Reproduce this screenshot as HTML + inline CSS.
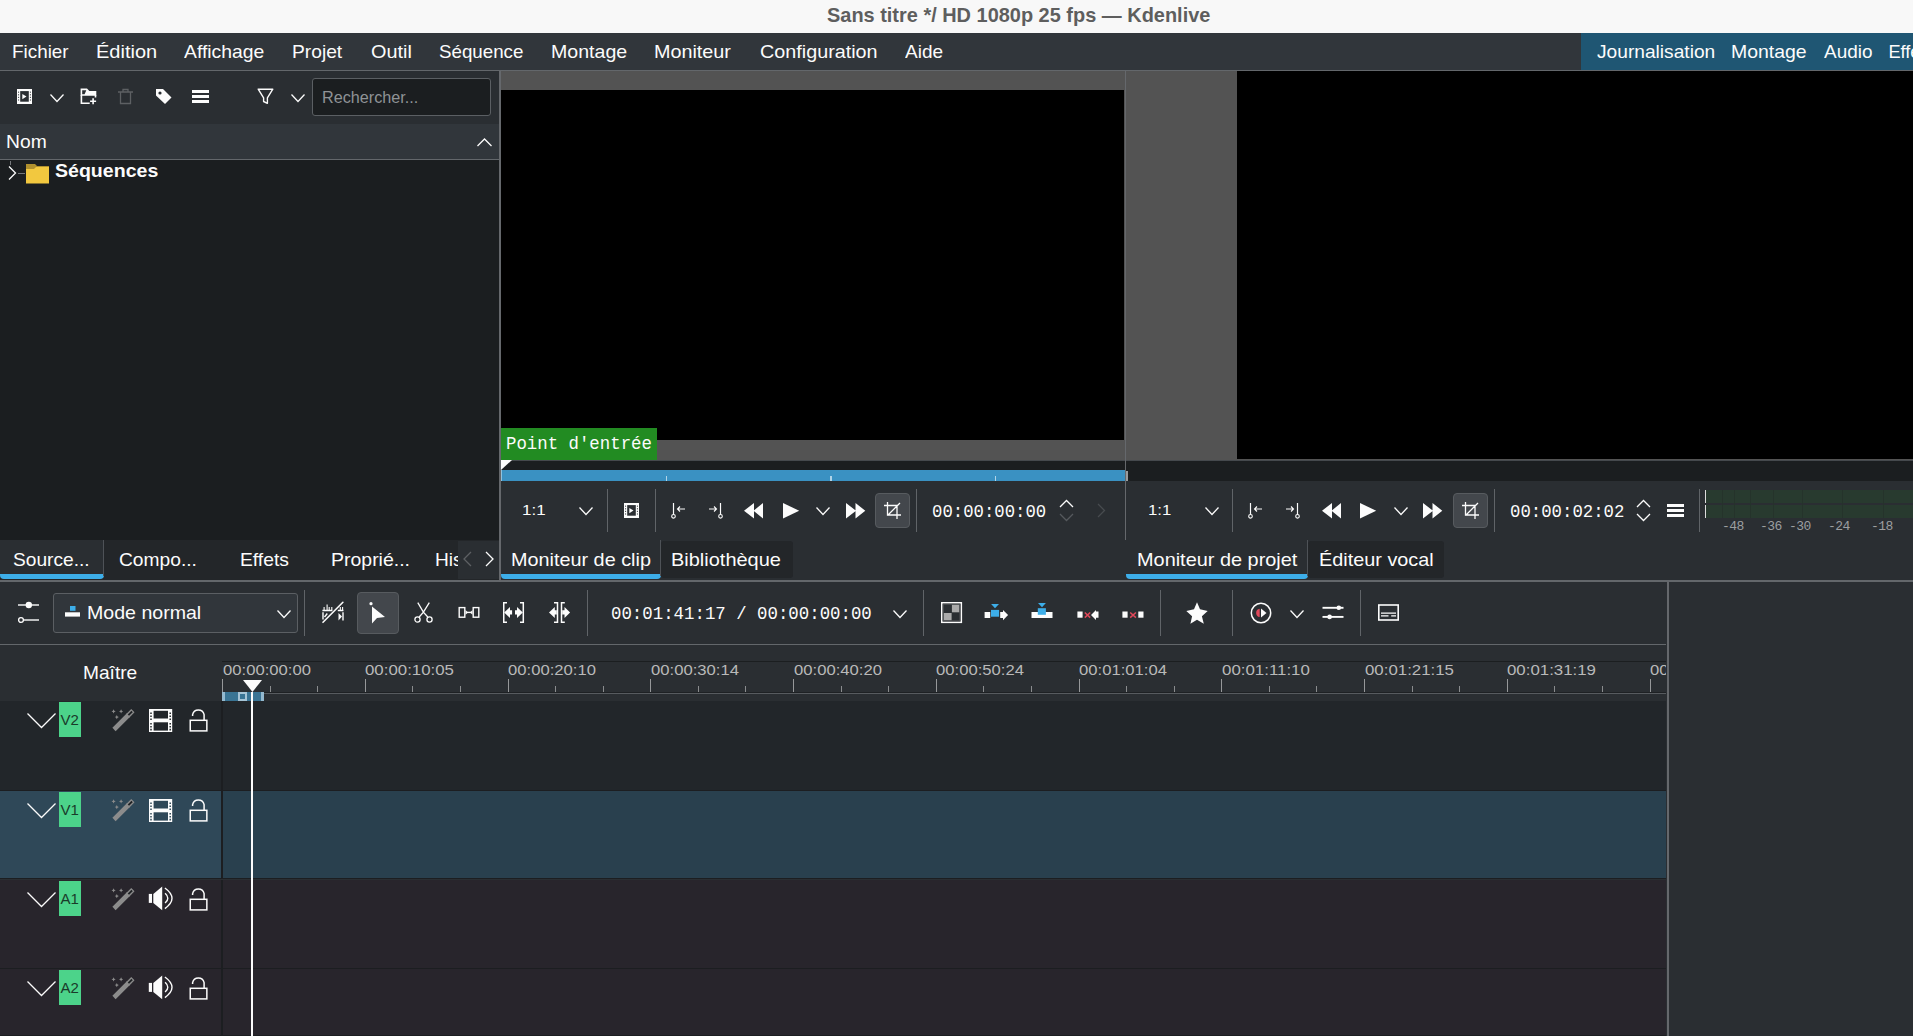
<!DOCTYPE html>
<html><head><meta charset="utf-8">
<style>
*{margin:0;padding:0;box-sizing:border-box}
html,body{width:1913px;height:1036px;overflow:hidden;background:#2a2e32}
body{position:relative;font-family:"Liberation Sans",sans-serif;color:#fcfcfc}
.a{position:absolute}
.t{position:absolute;white-space:pre;line-height:1}
svg{position:absolute;overflow:visible}
</style></head><body>
<div class="a" style="left:0px;top:0px;width:1913px;height:33px;background:#f8f8f8;"></div>
<div class="t" style="left:826.80px;top:4.93px;font-size:20.4px;font-weight:bold;color:#5e5e5e;font-family:'Liberation Sans';transform:scaleX(0.9777);transform-origin:0 0;">Sans titre */ HD 1080p 25 fps — Kdenlive</div>
<div class="a" style="left:0px;top:33px;width:1913px;height:37px;background:#31363b;"></div>
<div class="a" style="left:0px;top:70px;width:1913px;height:1px;background:#63676b;"></div>
<div class="t" style="left:12.46px;top:42.79px;font-size:18.2px;font-weight:normal;color:#fcfcfc;font-family:'Liberation Sans';transform:scaleX(1.0371);transform-origin:0 0;">Fichier</div>
<div class="t" style="left:96.10px;top:42.79px;font-size:18.2px;font-weight:normal;color:#fcfcfc;font-family:'Liberation Sans';transform:scaleX(1.0992);transform-origin:0 0;">Édition</div>
<div class="t" style="left:184.30px;top:42.79px;font-size:18.2px;font-weight:normal;color:#fcfcfc;font-family:'Liberation Sans';transform:scaleX(1.0638);transform-origin:0 0;">Affichage</div>
<div class="t" style="left:292.24px;top:42.79px;font-size:18.2px;font-weight:normal;color:#fcfcfc;font-family:'Liberation Sans';transform:scaleX(1.0569);transform-origin:0 0;">Projet</div>
<div class="t" style="left:370.60px;top:42.79px;font-size:18.2px;font-weight:normal;color:#fcfcfc;font-family:'Liberation Sans';transform:scaleX(1.0920);transform-origin:0 0;">Outil</div>
<div class="t" style="left:439.10px;top:42.79px;font-size:18.2px;font-weight:normal;color:#fcfcfc;font-family:'Liberation Sans';transform:scaleX(1.0306);transform-origin:0 0;">Séquence</div>
<div class="t" style="left:550.72px;top:42.79px;font-size:18.2px;font-weight:normal;color:#fcfcfc;font-family:'Liberation Sans';transform:scaleX(1.0766);transform-origin:0 0;">Montage</div>
<div class="t" style="left:654.41px;top:42.79px;font-size:18.2px;font-weight:normal;color:#fcfcfc;font-family:'Liberation Sans';transform:scaleX(1.0875);transform-origin:0 0;">Moniteur</div>
<div class="t" style="left:760.00px;top:42.79px;font-size:18.2px;font-weight:normal;color:#fcfcfc;font-family:'Liberation Sans';transform:scaleX(1.0872);transform-origin:0 0;">Configuration</div>
<div class="t" style="left:904.60px;top:42.79px;font-size:18.2px;font-weight:normal;color:#fcfcfc;font-family:'Liberation Sans';transform:scaleX(1.0445);transform-origin:0 0;">Aide</div>
<div class="a" style="left:1581px;top:33px;width:332px;height:37px;background:#1f5673;"></div>
<div class="t" style="left:1596.90px;top:42.79px;font-size:18.2px;font-weight:normal;color:#fcfcfc;font-family:'Liberation Sans';transform:scaleX(1.0539);transform-origin:0 0;">Journalisation</div>
<div class="t" style="left:1730.93px;top:42.79px;font-size:18.2px;font-weight:normal;color:#fcfcfc;font-family:'Liberation Sans';transform:scaleX(1.0680);transform-origin:0 0;">Montage</div>
<div class="t" style="left:1823.50px;top:42.79px;font-size:18.2px;font-weight:normal;color:#fcfcfc;font-family:'Liberation Sans';transform:scaleX(1.0431);transform-origin:0 0;">Audio</div>
<div class="t" style="left:1888.40px;top:42.79px;font-size:18.2px;font-weight:normal;color:#fcfcfc;font-family:'Liberation Sans';">Effets</div>
<div class="a" style="left:0px;top:71px;width:499px;height:53px;background:#2a2e32;"></div>
<svg style="left:17px;top:89px" width="15" height="15" viewBox="0 0 15 15"><rect x="0" y="0" width="15" height="15" fill="#fcfcfc"/><rect x="3.2" y="2.1" width="8.6" height="10.6" fill="#2a2e32"/><path d="M1.6 2.6 V3.8 M1.6 5.2 V6.4 M1.6 7.8 V9 M1.6 10.4 V11.6 M13.4 2.6 V3.8 M13.4 5.2 V6.4 M13.4 7.8 V9 M13.4 10.4 V11.6" stroke="#2a2e32" stroke-width="0.9"/><path d="M5.3 5 L9.5 7.5 L5.3 10.2Z" fill="#fcfcfc"/></svg>
<svg style="left:50px;top:94px" width="14" height="8" viewBox="0 0 14 8"><polyline points="0.5,0.5 7.0,7.5 13.5,0.5" fill="none" stroke="#fcfcfc" stroke-width="1.3"/></svg>
<svg style="left:80px;top:88px" width="17" height="17" viewBox="0 0 17 17"><path d="M0.6 0.6 H7 L9.3 3 H16.3 V7.8 H0.6Z" fill="#fcfcfc"/><path d="M2.2 2.2 H6.3 L4.6 6.2 H2.2Z" fill="#2a2e32"/><path d="M1.4 7 V15.2 H9.7 M15.5 7 V9.5" fill="none" stroke="#fcfcfc" stroke-width="1.6"/><path d="M13.1 10.2 V16.2 M10.1 13.2 H16.1" stroke="#fcfcfc" stroke-width="1.6"/></svg>
<svg style="left:117px;top:88px" width="17" height="17" viewBox="0 0 17 17"><path d="M1 4 H16 M6 4 V1.5 H11 V4 M3.5 4 V15.5 H13.5 V4" fill="none" stroke="#5d6063" stroke-width="1.3"/></svg>
<svg style="left:155px;top:88px" width="17" height="17" viewBox="0 0 17 17"><path d="M1 1 H8 L16.5 9.5 L10 16 L1 7.5Z" fill="#fcfcfc"/><circle cx="5" cy="5" r="1.6" fill="#2a2e32"/></svg>
<svg style="left:192px;top:89px" width="17" height="15" viewBox="0 0 17 15"><rect x="0" y="1" width="17" height="3" fill="#fcfcfc"/><rect x="0" y="6" width="17" height="3" fill="#fcfcfc"/><rect x="0" y="11" width="17" height="3" fill="#fcfcfc"/></svg>
<svg style="left:257px;top:88px" width="17" height="17" viewBox="0 0 17 17"><path d="M1.2 1.2 H15.8 L10.4 9.8 V15.3 L6.6 13.5 V9.8Z" fill="none" stroke="#fcfcfc" stroke-width="1.4" stroke-linejoin="round"/></svg>
<svg style="left:291px;top:94px" width="14" height="8" viewBox="0 0 14 8"><polyline points="0.5,0.5 7.0,7.5 13.5,0.5" fill="none" stroke="#fcfcfc" stroke-width="1.3"/></svg>
<div class="a" style="left:312px;top:78px;width:179px;height:38px;background:#1b1e20;border:1px solid #5b5f63;border-radius:3px"></div>
<div class="t" style="left:321.59px;top:89.66px;font-size:16px;font-weight:normal;color:#8f9396;font-family:'Liberation Sans';transform:scaleX(1.0117);transform-origin:0 0;">Rechercher...</div>
<div class="a" style="left:0px;top:124px;width:499px;height:35px;background:#31363b;"></div>
<div class="a" style="left:0px;top:159px;width:499px;height:1px;background:#63676b;"></div>
<div class="t" style="left:5.70px;top:133.90px;font-size:17.6px;font-weight:normal;color:#fcfcfc;font-family:'Liberation Sans';transform:scaleX(1.0961);transform-origin:0 0;">Nom</div>
<svg style="left:477px;top:137.5px" width="15" height="9" viewBox="0 0 15 9"><polyline points="0.5,8 7.5,1 14.5,8" fill="none" stroke="#fcfcfc" stroke-width="1.3"/></svg>
<div class="a" style="left:0px;top:160px;width:499px;height:380px;background:#1b1e20;"></div>
<div class="a" style="left:10px;top:161px;width:1px;height:4px;background:#75787b;"></div>
<svg style="left:8px;top:166px" width="9" height="15" viewBox="0 0 9 15"><polyline points="1,0.5 7.5,7 1,13.5" fill="none" stroke="#fcfcfc" stroke-width="1.3"/></svg>
<div class="a" style="left:18px;top:173px;width:7px;height:1px;background:#75787b;"></div>
<svg style="left:26px;top:163px" width="24" height="21" viewBox="0 0 24 21"><path d="M0 1 H9 L11 3 H23 V20 H0Z" fill="#b0902e"/><path d="M0 6 H8 L10 4 H23 V20.5 H0Z" fill="#f2c83f"/></svg>
<div class="t" style="left:55.00px;top:163.30px;font-size:17.6px;font-weight:bold;color:#fcfcfc;font-family:'Liberation Sans';transform:scaleX(1.1115);transform-origin:0 0;">Séquences</div>
<div class="a" style="left:499px;top:71px;width:2px;height:470px;background:#65686c;"></div>
<div class="a" style="left:501px;top:71px;width:624px;height:389px;background:#535353;"></div>
<div class="a" style="left:501px;top:90px;width:623px;height:350px;background:#000;"></div>
<div class="a" style="left:501px;top:428px;width:156px;height:32px;background:#228b22;"></div>
<div class="t" style="left:506.21px;top:435.79px;font-size:17.5px;font-weight:normal;color:#fcfcfc;font-family:'Liberation Mono';transform:scaleX(0.9923);transform-origin:0 0;">Point d'entrée</div>
<div class="a" style="left:501px;top:460px;width:624px;height:1px;background:#45494d;"></div>
<div class="a" style="left:501px;top:461px;width:624px;height:9px;background:#1b1e20;"></div>
<svg style="left:501px;top:460px" width="12" height="10" viewBox="0 0 12 10"><path d="M0 0 H11 L0 10Z" fill="#fcfcfc"/></svg>
<div class="a" style="left:501px;top:470px;width:625px;height:11px;background:#3a91c2;"></div>
<div class="a" style="left:665.5px;top:476px;width:1.5px;height:5px;background:#b0d4e8;"></div>
<div class="a" style="left:830px;top:476px;width:1.5px;height:5px;background:#b0d4e8;"></div>
<div class="a" style="left:994.5px;top:476px;width:1.5px;height:5px;background:#b0d4e8;"></div>
<div class="a" style="left:501px;top:470px;width:1px;height:11px;background:#8fc3df;"></div>
<div class="a" style="left:1125px;top:71px;width:1px;height:510px;background:#65686c;"></div>
<div class="a" style="left:1126px;top:71px;width:787px;height:389px;background:#535353;"></div>
<div class="a" style="left:1237px;top:71px;width:676px;height:388px;background:#000;"></div>
<div class="a" style="left:1126px;top:460px;width:787px;height:1px;background:#45494d;"></div>
<div class="a" style="left:1126px;top:461px;width:787px;height:20px;background:#1b1e20;"></div>
<div class="a" style="left:1125.5px;top:471px;width:2px;height:10px;background:#9a9c9e;"></div>
<div class="a" style="left:501px;top:481px;width:624px;height:59px;background:#2a2e32;"></div>
<div class="a" style="left:1126px;top:481px;width:787px;height:59px;background:#2a2e32;"></div>
<div class="t" style="left:522.11px;top:502.38px;font-size:15.5px;font-weight:normal;color:#fcfcfc;font-family:'Liberation Sans';transform:scaleX(1.0940);transform-origin:0 0;">1:1</div>
<svg style="left:579px;top:507px" width="14" height="8" viewBox="0 0 14 8"><polyline points="0.5,0.5 7.0,7.5 13.5,0.5" fill="none" stroke="#fcfcfc" stroke-width="1.3"/></svg>
<div class="a" style="left:607px;top:489px;width:1px;height:43px;background:#606468;"></div>
<svg style="left:624px;top:503px" width="15" height="15" viewBox="0 0 15 15"><rect x="0" y="0" width="15" height="15" fill="#fcfcfc"/><rect x="3.2" y="2.1" width="8.6" height="10.6" fill="#2a2e32"/><path d="M1.6 2.6 V3.8 M1.6 5.2 V6.4 M1.6 7.8 V9 M1.6 10.4 V11.6 M13.4 2.6 V3.8 M13.4 5.2 V6.4 M13.4 7.8 V9 M13.4 10.4 V11.6" stroke="#2a2e32" stroke-width="0.9"/><path d="M5.3 5 L9.5 7.5 L5.3 10.2Z" fill="#fcfcfc"/></svg>
<div class="a" style="left:655px;top:489px;width:1px;height:43px;background:#606468;"></div>
<svg style="left:671px;top:502.5px" width="15" height="16" viewBox="0 0 15 16"><path d="M2.5 0 V11.5" stroke="#fcfcfc" stroke-width="1.2"/><circle cx="2.5" cy="13.3" r="1.8" fill="none" stroke="#fcfcfc" stroke-width="1.1"/><path d="M14 6 H6.5 M9 3.5 L6.5 6 L9 8.5" fill="none" stroke="#fcfcfc" stroke-width="1.1"/></svg>
<svg style="left:707.5px;top:502.5px" width="15" height="16" viewBox="0 0 15 16"><path d="M12.5 0 V11.5" stroke="#fcfcfc" stroke-width="1.2"/><circle cx="12.5" cy="13.3" r="1.8" fill="none" stroke="#fcfcfc" stroke-width="1.1"/><path d="M1 6 H8.5 M6 3.5 L8.5 6 L6 8.5" fill="none" stroke="#fcfcfc" stroke-width="1.1"/></svg>
<svg style="left:744px;top:502.7px" width="20" height="16" viewBox="0 0 20 16"><path d="M0 7.75 L10 0 V15.5Z M9.5 7.75 L19 0 V15.5Z" fill="#fcfcfc"/></svg>
<svg style="left:783px;top:502.7px" width="17" height="16" viewBox="0 0 17 16"><path d="M0 0 L16.2 7.75 L0 15.5Z" fill="#fcfcfc"/></svg>
<svg style="left:816px;top:507.2px" width="14" height="8" viewBox="0 0 14 8"><polyline points="0.5,0.5 7.0,7.5 13.5,0.5" fill="none" stroke="#fcfcfc" stroke-width="1.3"/></svg>
<svg style="left:845.5px;top:502.7px" width="20" height="16" viewBox="0 0 20 16"><path d="M0 0 L10 7.75 L0 15.5Z M9.5 0 L19.3 7.75 L9.5 15.5Z" fill="#fcfcfc"/></svg>
<div class="a" style="left:875px;top:493px;width:35px;height:35px;background:#43474c;border:1px solid #575b5f;border-radius:4px"></div>
<svg style="left:884.0px;top:502.0px" width="17" height="17" viewBox="0 0 17 17"><path d="M0 3.5 H13 V17 M3.5 0 V13 H17 M16 1 L3.5 13.5" fill="none" stroke="#fcfcfc" stroke-width="1.3"/></svg>
<div class="a" style="left:916px;top:489px;width:1px;height:43px;background:#606468;"></div>
<div class="t" style="left:932.31px;top:504.39px;font-size:17.5px;font-weight:normal;color:#fcfcfc;font-family:'Liberation Mono';transform:scaleX(0.9884);transform-origin:0 0;">00:00:00:00</div>
<svg style="left:1059px;top:498.5px" width="15" height="23" viewBox="0 0 15 23"><polyline points="1,8 7.5,1.5 14,8" fill="none" stroke="#fcfcfc" stroke-width="1.3"/><polyline points="1,15 7.5,21.5 14,15" fill="none" stroke="#55595d" stroke-width="1.3"/></svg>
<svg style="left:1097px;top:503px" width="9" height="15" viewBox="0 0 9 15"><polyline points="1,1 7.5,7.5 1,14" fill="none" stroke="#474b4f" stroke-width="1.3"/></svg>
<div class="t" style="left:1147.62px;top:502.38px;font-size:15.5px;font-weight:normal;color:#fcfcfc;font-family:'Liberation Sans';transform:scaleX(1.0790);transform-origin:0 0;">1:1</div>
<svg style="left:1204.5px;top:507px" width="14" height="8" viewBox="0 0 14 8"><polyline points="0.5,0.5 7.0,7.5 13.5,0.5" fill="none" stroke="#fcfcfc" stroke-width="1.3"/></svg>
<div class="a" style="left:1232px;top:489px;width:1px;height:43px;background:#606468;"></div>
<svg style="left:1248px;top:502.5px" width="15" height="16" viewBox="0 0 15 16"><path d="M2.5 0 V11.5" stroke="#fcfcfc" stroke-width="1.2"/><circle cx="2.5" cy="13.3" r="1.8" fill="none" stroke="#fcfcfc" stroke-width="1.1"/><path d="M14 6 H6.5 M9 3.5 L6.5 6 L9 8.5" fill="none" stroke="#fcfcfc" stroke-width="1.1"/></svg>
<svg style="left:1285px;top:502.5px" width="15" height="16" viewBox="0 0 15 16"><path d="M12.5 0 V11.5" stroke="#fcfcfc" stroke-width="1.2"/><circle cx="12.5" cy="13.3" r="1.8" fill="none" stroke="#fcfcfc" stroke-width="1.1"/><path d="M1 6 H8.5 M6 3.5 L8.5 6 L6 8.5" fill="none" stroke="#fcfcfc" stroke-width="1.1"/></svg>
<svg style="left:1322px;top:502.7px" width="20" height="16" viewBox="0 0 20 16"><path d="M0 7.75 L10 0 V15.5Z M9.5 7.75 L19 0 V15.5Z" fill="#fcfcfc"/></svg>
<svg style="left:1360px;top:502.7px" width="17" height="16" viewBox="0 0 17 16"><path d="M0 0 L16.2 7.75 L0 15.5Z" fill="#fcfcfc"/></svg>
<svg style="left:1393.5px;top:507.2px" width="14" height="8" viewBox="0 0 14 8"><polyline points="0.5,0.5 7.0,7.5 13.5,0.5" fill="none" stroke="#fcfcfc" stroke-width="1.3"/></svg>
<svg style="left:1422.5px;top:502.7px" width="20" height="16" viewBox="0 0 20 16"><path d="M0 0 L10 7.75 L0 15.5Z M9.5 0 L19.3 7.75 L9.5 15.5Z" fill="#fcfcfc"/></svg>
<div class="a" style="left:1452.5px;top:493px;width:35px;height:35px;background:#43474c;border:1px solid #575b5f;border-radius:4px"></div>
<svg style="left:1461.5px;top:502.0px" width="17" height="17" viewBox="0 0 17 17"><path d="M0 3.5 H13 V17 M3.5 0 V13 H17 M16 1 L3.5 13.5" fill="none" stroke="#fcfcfc" stroke-width="1.3"/></svg>
<div class="a" style="left:1493.5px;top:489px;width:1px;height:43px;background:#606468;"></div>
<div class="t" style="left:1509.51px;top:504.39px;font-size:17.5px;font-weight:normal;color:#fcfcfc;font-family:'Liberation Mono';transform:scaleX(0.9902);transform-origin:0 0;">00:00:02:02</div>
<svg style="left:1636px;top:498.5px" width="15" height="23" viewBox="0 0 15 23"><polyline points="1,8 7.5,1.5 14,8" fill="none" stroke="#fcfcfc" stroke-width="1.3"/><polyline points="1,15 7.5,21.5 14,15" fill="none" stroke="#fcfcfc" stroke-width="1.3"/></svg>
<svg style="left:1667px;top:503px" width="17" height="15" viewBox="0 0 17 15"><rect x="0" y="1" width="17" height="3" fill="#fcfcfc"/><rect x="0" y="6" width="17" height="3" fill="#fcfcfc"/><rect x="0" y="11" width="17" height="3" fill="#fcfcfc"/></svg>
<div class="a" style="left:1699px;top:489px;width:1px;height:43px;background:#606468;"></div>
<div class="a" style="left:1706px;top:490px;width:207px;height:13px;background:#283a2f;"></div>
<div class="a" style="left:1706px;top:505px;width:207px;height:13px;background:#283a2f;"></div>
<div class="a" style="left:1722px;top:490px;width:1px;height:28px;background:#25332b;"></div>
<div class="a" style="left:1734px;top:490px;width:1px;height:28px;background:#25332b;"></div>
<div class="a" style="left:1750px;top:490px;width:1px;height:28px;background:#25332b;"></div>
<div class="a" style="left:1773px;top:490px;width:1px;height:28px;background:#25332b;"></div>
<div class="a" style="left:1802px;top:490px;width:1px;height:28px;background:#25332b;"></div>
<div class="a" style="left:1842px;top:490px;width:1px;height:28px;background:#25332b;"></div>
<div class="a" style="left:1883px;top:490px;width:1px;height:28px;background:#25332b;"></div>
<div class="a" style="left:1705px;top:490px;width:1.3px;height:13px;background:#dcdcdc;"></div>
<div class="a" style="left:1705px;top:505px;width:1.3px;height:13px;background:#dcdcdc;"></div>
<div class="t" style="left:1722.00px;top:520.04px;font-size:13px;font-weight:normal;color:#9c9ea0;font-family:'Liberation Mono';letter-spacing:-0.5px">-48</div>
<div class="t" style="left:1760.00px;top:520.04px;font-size:13px;font-weight:normal;color:#9c9ea0;font-family:'Liberation Mono';letter-spacing:-0.5px">-36</div>
<div class="t" style="left:1789.00px;top:520.04px;font-size:13px;font-weight:normal;color:#9c9ea0;font-family:'Liberation Mono';letter-spacing:-0.5px">-30</div>
<div class="t" style="left:1828.00px;top:520.04px;font-size:13px;font-weight:normal;color:#9c9ea0;font-family:'Liberation Mono';letter-spacing:-0.5px">-24</div>
<div class="t" style="left:1871.00px;top:520.04px;font-size:13px;font-weight:normal;color:#9c9ea0;font-family:'Liberation Mono';letter-spacing:-0.5px">-18</div>
<div class="a" style="left:0px;top:540px;width:499px;height:41px;background:#232629;"></div>
<div class="a" style="left:501px;top:540px;width:1412px;height:41px;background:#2a2e32;"></div>
<div class="a" style="left:0px;top:580px;width:1913px;height:2px;background:#63676b;"></div>
<div class="a" style="left:0px;top:540px;width:104px;height:38px;background:#2a2e32;"></div>
<div class="a" style="left:0px;top:574px;width:104px;height:5px;background:#3daee9;border-radius:0 0 4px 4px"></div>
<div class="a" style="left:103px;top:540px;width:1px;height:36px;background:#4e5257;"></div>
<div class="a" style="left:458px;top:541px;width:41px;height:38px;background:#2a2e32;"></div>
<div class="t" style="left:13.30px;top:550.89px;font-size:18.2px;font-weight:normal;color:#fcfcfc;font-family:'Liberation Sans';transform:scaleX(1.0525);transform-origin:0 0;">Source...</div>
<div class="t" style="left:119.20px;top:550.89px;font-size:18.2px;font-weight:normal;color:#fcfcfc;font-family:'Liberation Sans';transform:scaleX(1.0559);transform-origin:0 0;">Compo...</div>
<div class="t" style="left:239.64px;top:550.89px;font-size:18.2px;font-weight:normal;color:#fcfcfc;font-family:'Liberation Sans';transform:scaleX(1.0604);transform-origin:0 0;">Effets</div>
<div class="t" style="left:331.33px;top:550.89px;font-size:18.2px;font-weight:normal;color:#fcfcfc;font-family:'Liberation Sans';transform:scaleX(1.0706);transform-origin:0 0;">Proprié...</div>
<div class="a" style="left:435px;top:545px;width:23px;height:30px;overflow:hidden">
<div class="t" style="left:-0.15px;top:5.89px;font-size:18.2px;font-weight:normal;color:#fcfcfc;font-family:'Liberation Sans';transform:scaleX(1.0524);transform-origin:0 0;">Historique</div>
</div>
<svg style="left:463px;top:551px" width="9" height="16" viewBox="0 0 9 16"><polyline points="8,1 1,8 8,15" fill="none" stroke="#5d6063" stroke-width="1.3"/></svg>
<svg style="left:485px;top:551px" width="9" height="16" viewBox="0 0 9 16"><polyline points="1,1 8,8 1,15" fill="none" stroke="#fcfcfc" stroke-width="1.3"/></svg>
<div class="a" style="left:499px;top:540px;width:2px;height:42px;background:#65686c;"></div>
<div class="a" style="left:501px;top:540px;width:160px;height:38px;background:#2a2e32;"></div>
<div class="a" style="left:501px;top:574px;width:160px;height:5px;background:#3daee9;border-radius:0 0 4px 4px"></div>
<div class="a" style="left:660px;top:540px;width:1px;height:36px;background:#4e5257;"></div>
<div class="a" style="left:661px;top:541px;width:132px;height:37px;background:#232629;border-radius:3px"></div>
<div class="t" style="left:510.81px;top:550.89px;font-size:18.2px;font-weight:normal;color:#fcfcfc;font-family:'Liberation Sans';transform:scaleX(1.0898);transform-origin:0 0;">Moniteur de clip</div>
<div class="t" style="left:671.20px;top:550.89px;font-size:18.2px;font-weight:normal;color:#fcfcfc;font-family:'Liberation Sans';transform:scaleX(1.0980);transform-origin:0 0;">Bibliothèque</div>
<div class="a" style="left:1126px;top:540px;width:182px;height:38px;background:#2a2e32;"></div>
<div class="a" style="left:1126px;top:574px;width:182px;height:5px;background:#3daee9;border-radius:0 0 4px 4px"></div>
<div class="a" style="left:1307px;top:540px;width:1px;height:36px;background:#4e5257;"></div>
<div class="a" style="left:1308px;top:541px;width:136px;height:37px;background:#232629;border-radius:3px"></div>
<div class="t" style="left:1136.91px;top:550.89px;font-size:18.2px;font-weight:normal;color:#fcfcfc;font-family:'Liberation Sans';transform:scaleX(1.0939);transform-origin:0 0;">Moniteur de projet</div>
<div class="t" style="left:1319.41px;top:550.89px;font-size:18.2px;font-weight:normal;color:#fcfcfc;font-family:'Liberation Sans';transform:scaleX(1.0912);transform-origin:0 0;">Éditeur vocal</div>
<div class="a" style="left:0px;top:582px;width:1668px;height:62px;background:#2a2e32;"></div>
<div class="a" style="left:0px;top:644px;width:1668px;height:1px;background:#63676b;"></div>
<svg style="left:17px;top:598px" width="23" height="26" viewBox="0 0 23 26"><path d="M1 7 H22" stroke="#fcfcfc" stroke-width="1.4"/><circle cx="11.8" cy="7" r="3.2" fill="#fcfcfc"/><path d="M6 22 H22" stroke="#fcfcfc" stroke-width="1.4"/><circle cx="4" cy="22" r="2.4" fill="#2a2e32" stroke="#fcfcfc" stroke-width="1.3"/></svg>
<div class="a" style="left:53px;top:593px;width:245px;height:40px;background:#31363b;border:1px solid #5b5f63;border-radius:3px"></div>
<svg style="left:65px;top:605px" width="15" height="12" viewBox="0 0 15 12"><rect x="5" y="1" width="5.5" height="4.8" fill="#3daee9"/><rect x="0" y="7.3" width="15" height="4.3" fill="#fcfcfc"/></svg>
<div class="t" style="left:86.92px;top:603.69px;font-size:18.2px;font-weight:normal;color:#fcfcfc;font-family:'Liberation Sans';transform:scaleX(1.0759);transform-origin:0 0;">Mode normal</div>
<svg style="left:276.5px;top:610px" width="14" height="8" viewBox="0 0 14 8"><polyline points="0.5,0.5 7.0,7.5 13.5,0.5" fill="none" stroke="#fcfcfc" stroke-width="1.3"/></svg>
<div class="a" style="left:304px;top:590px;width:1px;height:46px;background:#606468;"></div>
<svg style="left:321.5px;top:602px" width="22" height="22" viewBox="0 0 22 22"><path d="M1 20.3 L20.9 0.3" stroke="#fcfcfc" stroke-width="1.6" stroke-linecap="round"/><path d="M0.4 8.5 H10.3 M15.8 8.5 H21.4" stroke="#fcfcfc" stroke-width="1.3"/><path d="M2.1 8.5 V5 M5.1 8.5 V2.5 M7.2 8.5 V5 M9.8 8.5 V5 M18.3 8.5 V5 M20.6 8.5 V5" stroke="#fcfcfc" stroke-width="1.1"/><path d="M1 10.3 V17.5 M2.5 15 L5.3 11.5 M21 10.3 V18.5" stroke="#fcfcfc" stroke-width="1.4"/><path d="M16.5 11 V18.5 L20 14.5Z" fill="#fcfcfc"/></svg>
<div class="a" style="left:357px;top:592px;width:42px;height:42px;background:#43474c;border:1px solid #575b5f;border-radius:4px"></div>
<svg style="left:369px;top:602px" width="18" height="22" viewBox="0 0 18 22"><circle cx="2" cy="1.7" r="1.6" fill="#fcfcfc"/><path d="M3 4.5 L16 15 L8 16 L3 21.5Z" fill="#fcfcfc"/></svg>
<svg style="left:414px;top:602px" width="19" height="22" viewBox="0 0 19 22"><path d="M3.8 0.6 L9.4 10.2 L5.2 15 M15.3 0.6 L9.4 10.2 L13.8 15" fill="none" stroke="#fcfcfc" stroke-width="1.3"/><circle cx="3.5" cy="17.5" r="2.6" fill="none" stroke="#fcfcfc" stroke-width="1.3"/><circle cx="15.5" cy="17.5" r="2.6" fill="none" stroke="#fcfcfc" stroke-width="1.3"/></svg>
<svg style="left:457.5px;top:606px" width="22" height="14" viewBox="0 0 22 14"><rect x="1.2" y="1.6" width="5.6" height="9.6" fill="none" stroke="#fcfcfc" stroke-width="1.4"/><rect x="15.2" y="1.6" width="5.6" height="9.6" fill="none" stroke="#fcfcfc" stroke-width="1.4"/><path d="M7.5 4 L10 6.4 L7.5 8.8Z M14.5 4 L12 6.4 L14.5 8.8Z" fill="#fcfcfc"/><path d="M9 6.4 H13" stroke="#fcfcfc" stroke-width="1.4"/></svg>
<svg style="left:502px;top:602px" width="23" height="22" viewBox="0 0 23 22"><path d="M5 0.75 H1.75 V20.3 H5 M18 0.75 H21.3 V20.3 H18" fill="none" stroke="#fcfcfc" stroke-width="1.5"/><path d="M2.2 10.4 L8 5 V8.3 H10.1 V12.5 H8 V15.9Z M20.8 10.4 L15 5 V8.3 H13 V12.5 H15 V15.9Z" fill="#fcfcfc"/></svg>
<svg style="left:548px;top:602px" width="23" height="22" viewBox="0 0 23 22"><path d="M6 0.75 H9.5 V20.3 H6 M16.8 0.75 H13.5 V20.3 H16.8" fill="none" stroke="#fcfcfc" stroke-width="1.5"/><path d="M1 10.4 L6.8 5 V8.3 H8.8 V12.5 H6.8 V15.9Z M22.1 10.4 L16.5 5 V8.3 H14.2 V12.5 H16.5 V15.9Z" fill="#fcfcfc"/></svg>
<div class="a" style="left:587px;top:590px;width:1px;height:46px;background:#606468;"></div>
<div class="t" style="left:611.01px;top:606.29px;font-size:17.5px;font-weight:normal;color:#fcfcfc;font-family:'Liberation Mono';transform:scaleX(0.9933);transform-origin:0 0;">00:01:41:17 / 00:00:00:00</div>
<svg style="left:892.5px;top:610px" width="14" height="8" viewBox="0 0 14 8"><polyline points="0.5,0.5 7.0,7.5 13.5,0.5" fill="none" stroke="#fcfcfc" stroke-width="1.3"/></svg>
<div class="a" style="left:923px;top:590px;width:1px;height:46px;background:#606468;"></div>
<svg style="left:941px;top:602px" width="21" height="21" viewBox="0 0 21 21"><rect x="0.75" y="0.75" width="19.6" height="19.6" fill="none" stroke="#fcfcfc" stroke-width="1.5"/><rect x="2.2" y="2.2" width="16.7" height="16.7" fill="none" stroke="#505356" stroke-width="0.9"/><rect x="10.9" y="2.8" width="7.3" height="7.5" fill="#aaaaaa"/><rect x="2.8" y="11" width="7.8" height="7.2" fill="#aaaaaa"/></svg>
<svg style="left:984px;top:602px" width="25" height="21" viewBox="0 0 25 21"><path d="M7.1 2 H15 L11 6.2Z" fill="#3daee9"/><rect x="7" y="7.9" width="8.1" height="6.8" fill="#3daee9"/><rect x="0.6" y="10" width="5.6" height="6" fill="#fcfcfc"/><rect x="16.2" y="10" width="3" height="6" fill="#fcfcfc"/><path d="M19 8.1 L24.1 13 L19 18.2Z" fill="#fcfcfc"/></svg>
<svg style="left:1030.5px;top:602px" width="22" height="21" viewBox="0 0 22 21"><path d="M7 0.9 H14.9 L11 5.3Z" fill="#3daee9"/><rect x="6.8" y="6.2" width="8.1" height="6.6" fill="#3daee9"/><rect x="0.5" y="10" width="21" height="6" fill="#fcfcfc"/><rect x="6.8" y="10" width="8.1" height="2.8" fill="#3daee9"/></svg>
<svg style="left:1076.5px;top:602px" width="22" height="21" viewBox="0 0 22 21"><rect x="0.4" y="9.5" width="5.2" height="6.2" fill="#fcfcfc"/><path d="M7.8 10.5 L13.2 15.6 M13.2 10.5 L7.8 15.6" stroke="#e0485a" stroke-width="1.5"/><path d="M14 13 L19 8 V9.5 H21.5 V15.7 H19 V18Z" fill="#fcfcfc"/></svg>
<svg style="left:1121.5px;top:602px" width="22" height="21" viewBox="0 0 22 21"><rect x="0.4" y="9.5" width="5.2" height="6.2" fill="#fcfcfc"/><path d="M8.2 10.5 L13.9 15.6 M13.9 10.5 L8.2 15.6" stroke="#e0485a" stroke-width="1.5"/><rect x="16.3" y="9.5" width="5.2" height="6.2" fill="#fcfcfc"/></svg>
<div class="a" style="left:1160px;top:590px;width:1px;height:46px;background:#606468;"></div>
<svg style="left:1185.5px;top:601.5px" width="22" height="22" viewBox="0 0 22 22"><path d="M11 0.3 L14 7.3 L21.7 8.9 L15.9 14.3 L17.8 21.7 L11 17.8 L4.4 21.7 L6.1 14.3 L0.3 8.9 L8 7.3Z" fill="#fcfcfc"/></svg>
<div class="a" style="left:1232px;top:590px;width:1px;height:46px;background:#606468;"></div>
<svg style="left:1249.5px;top:601.5px" width="22" height="22" viewBox="0 0 22 22"><circle cx="11" cy="11" r="9.7" fill="none" stroke="#fcfcfc" stroke-width="1.5"/><path d="M9.7 6.8 A4.2 4.2 0 0 0 9.7 15.1Z" fill="#e0485a"/><path d="M11 6.6 L16.5 11 L11 15.4Z" fill="#fcfcfc"/></svg>
<svg style="left:1289.5px;top:610px" width="14" height="8" viewBox="0 0 14 8"><polyline points="0.5,0.5 7.0,7.5 13.5,0.5" fill="none" stroke="#fcfcfc" stroke-width="1.3"/></svg>
<svg style="left:1321.5px;top:601px" width="22" height="23" viewBox="0 0 22 23"><path d="M0.5 6.8 H21.5" stroke="#fcfcfc" stroke-width="1.9"/><circle cx="16.8" cy="6.8" r="2.3" fill="#fcfcfc"/><path d="M0.5 15.9 H21.5" stroke="#fcfcfc" stroke-width="1.9"/><circle cx="7.6" cy="15.9" r="2.3" fill="#fcfcfc"/></svg>
<div class="a" style="left:1360px;top:590px;width:1px;height:46px;background:#606468;"></div>
<svg style="left:1378px;top:602px" width="22" height="21" viewBox="0 0 22 21"><rect x="0.8" y="3" width="19.4" height="15" fill="none" stroke="#fcfcfc" stroke-width="1.6"/><path d="M3 11.2 H18 M3 13.8 H10.5 M13.2 13.8 H18" stroke="#fcfcfc" stroke-width="1.3"/></svg>
<div class="a" style="left:0px;top:645px;width:1668px;height:56px;background:#2a2e32;"></div>
<div class="t" style="left:82.75px;top:664.19px;font-size:18.2px;font-weight:normal;color:#fcfcfc;font-family:'Liberation Sans';transform:scaleX(1.0530);transform-origin:0 0;">Maître</div>
<div class="a" style="left:222px;top:661px;width:1446px;height:1px;background:#1b1e20;"></div>
<div class="a" style="left:222px;top:645px;width:1446px;height:56px;overflow:hidden">
<div class="t" style="left:0.50px;top:16.78px;font-size:15.5px;font-weight:normal;color:#b9b9b9;font-family:'Liberation Sans';transform:scaleX(1.0734);transform-origin:0 0;">00:00:00:00</div>
<div class="a" style="left:0px;top:34px;width:1px;height:13px;background:#96989a;"></div>
<div class="a" style="left:48px;top:41px;width:1px;height:6px;background:#8a8c8e;"></div>
<div class="a" style="left:95px;top:41px;width:1px;height:6px;background:#8a8c8e;"></div>
<div class="t" style="left:143.26px;top:16.78px;font-size:15.5px;font-weight:normal;color:#b9b9b9;font-family:'Liberation Sans';transform:scaleX(1.0866);transform-origin:0 0;">00:00:10:05</div>
<div class="a" style="left:143px;top:34px;width:1px;height:13px;background:#96989a;"></div>
<div class="a" style="left:190px;top:41px;width:1px;height:6px;background:#8a8c8e;"></div>
<div class="a" style="left:238px;top:41px;width:1px;height:6px;background:#8a8c8e;"></div>
<div class="t" style="left:286.02px;top:16.78px;font-size:15.5px;font-weight:normal;color:#b9b9b9;font-family:'Liberation Sans';transform:scaleX(1.0734);transform-origin:0 0;">00:00:20:10</div>
<div class="a" style="left:286px;top:34px;width:1px;height:13px;background:#96989a;"></div>
<div class="a" style="left:333px;top:41px;width:1px;height:6px;background:#8a8c8e;"></div>
<div class="a" style="left:381px;top:41px;width:1px;height:6px;background:#8a8c8e;"></div>
<div class="t" style="left:428.78px;top:16.78px;font-size:15.5px;font-weight:normal;color:#b9b9b9;font-family:'Liberation Sans';transform:scaleX(1.0734);transform-origin:0 0;">00:00:30:14</div>
<div class="a" style="left:428px;top:34px;width:1px;height:13px;background:#96989a;"></div>
<div class="a" style="left:476px;top:41px;width:1px;height:6px;background:#8a8c8e;"></div>
<div class="a" style="left:523px;top:41px;width:1px;height:6px;background:#8a8c8e;"></div>
<div class="t" style="left:571.54px;top:16.78px;font-size:15.5px;font-weight:normal;color:#b9b9b9;font-family:'Liberation Sans';transform:scaleX(1.0734);transform-origin:0 0;">00:00:40:20</div>
<div class="a" style="left:571px;top:34px;width:1px;height:13px;background:#96989a;"></div>
<div class="a" style="left:619px;top:41px;width:1px;height:6px;background:#8a8c8e;"></div>
<div class="a" style="left:666px;top:41px;width:1px;height:6px;background:#8a8c8e;"></div>
<div class="t" style="left:714.30px;top:16.78px;font-size:15.5px;font-weight:normal;color:#b9b9b9;font-family:'Liberation Sans';transform:scaleX(1.0734);transform-origin:0 0;">00:00:50:24</div>
<div class="a" style="left:714px;top:34px;width:1px;height:13px;background:#96989a;"></div>
<div class="a" style="left:761px;top:41px;width:1px;height:6px;background:#8a8c8e;"></div>
<div class="a" style="left:809px;top:41px;width:1px;height:6px;background:#8a8c8e;"></div>
<div class="t" style="left:857.06px;top:16.78px;font-size:15.5px;font-weight:normal;color:#b9b9b9;font-family:'Liberation Sans';transform:scaleX(1.0734);transform-origin:0 0;">00:01:01:04</div>
<div class="a" style="left:857px;top:34px;width:1px;height:13px;background:#96989a;"></div>
<div class="a" style="left:904px;top:41px;width:1px;height:6px;background:#8a8c8e;"></div>
<div class="a" style="left:952px;top:41px;width:1px;height:6px;background:#8a8c8e;"></div>
<div class="t" style="left:999.82px;top:16.78px;font-size:15.5px;font-weight:normal;color:#b9b9b9;font-family:'Liberation Sans';transform:scaleX(1.0886);transform-origin:0 0;">00:01:11:10</div>
<div class="a" style="left:999px;top:34px;width:1px;height:13px;background:#96989a;"></div>
<div class="a" style="left:1047px;top:41px;width:1px;height:6px;background:#8a8c8e;"></div>
<div class="a" style="left:1094px;top:41px;width:1px;height:6px;background:#8a8c8e;"></div>
<div class="t" style="left:1142.58px;top:16.78px;font-size:15.5px;font-weight:normal;color:#b9b9b9;font-family:'Liberation Sans';transform:scaleX(1.0866);transform-origin:0 0;">00:01:21:15</div>
<div class="a" style="left:1142px;top:34px;width:1px;height:13px;background:#96989a;"></div>
<div class="a" style="left:1190px;top:41px;width:1px;height:6px;background:#8a8c8e;"></div>
<div class="a" style="left:1237px;top:41px;width:1px;height:6px;background:#8a8c8e;"></div>
<div class="t" style="left:1285.34px;top:16.78px;font-size:15.5px;font-weight:normal;color:#b9b9b9;font-family:'Liberation Sans';transform:scaleX(1.0866);transform-origin:0 0;">00:01:31:19</div>
<div class="a" style="left:1285px;top:34px;width:1px;height:13px;background:#96989a;"></div>
<div class="a" style="left:1332px;top:41px;width:1px;height:6px;background:#8a8c8e;"></div>
<div class="a" style="left:1380px;top:41px;width:1px;height:6px;background:#8a8c8e;"></div>
<div class="t" style="left:1428.10px;top:16.78px;font-size:15.5px;font-weight:normal;color:#b9b9b9;font-family:'Liberation Sans';transform:scaleX(1.0734);transform-origin:0 0;">00:01:41:24</div>
<div class="a" style="left:1428px;top:34px;width:1px;height:13px;background:#96989a;"></div>
<div class="a" style="left:1475px;top:41px;width:1px;height:6px;background:#8a8c8e;"></div>
<div class="a" style="left:1523px;top:41px;width:1px;height:6px;background:#8a8c8e;"></div>
</div>
<div class="a" style="left:222px;top:692px;width:1446px;height:1px;background:#1e2124;"></div>
<div class="a" style="left:222px;top:693px;width:1446px;height:1px;background:#575b5f;"></div>
<div class="a" style="left:222px;top:694px;width:1446px;height:7px;background:#2a2e32;"></div>
<div class="a" style="left:222px;top:692px;width:42px;height:9px;background:#3a7494;"></div>
<div class="a" style="left:222px;top:692px;width:3px;height:9px;background:#94b9cf;"></div>
<div class="a" style="left:261px;top:692px;width:3px;height:9px;background:#94b9cf;"></div>
<div class="a" style="left:238px;top:692px;width:9px;height:9px;background:#3a7494;border:2px solid #a6c4d6"></div>
<svg style="left:243px;top:680px" width="20" height="12" viewBox="0 0 20 12"><path d="M0 0 H19 L9.5 12Z" fill="#fcfcfc"/></svg>
<div class="a" style="left:0px;top:701px;width:221px;height:90px;background:#22262a;"></div>
<div class="a" style="left:223px;top:701px;width:1443px;height:90px;background:#22262a;"></div>
<div class="a" style="left:221px;top:701px;width:2px;height:90px;background:#1c1e21;"></div>
<div class="a" style="left:0px;top:790px;width:1668px;height:1px;background:#1c1e21;"></div>
<svg style="left:26.5px;top:713px" width="29" height="15" viewBox="0 0 29 15"><polyline points="0.5,0.5 14.5,14.5 28.5,0.5" fill="none" stroke="#fcfcfc" stroke-width="1.3"/></svg>
<div class="a" style="left:59px;top:702px;width:22px;height:35px;background:#4cd38a;"></div>
<div class="t" style="left:60.40px;top:712.00px;font-size:15px;font-weight:normal;color:#1a3b2a;font-family:'Liberation Sans';">V2</div>
<svg style="left:111px;top:707px" width="25" height="26" viewBox="0 0 25 26"><path d="M3 22.5 L17.5 8" stroke="#8c8c8c" stroke-width="4.6"/><path d="M16.6 9 L21.9 3.7" stroke="#8c8c8c" stroke-width="4.6"/><path d="M17.4 8.2 L21.1 4.5" stroke="#202326" stroke-width="1.8"/><path d="M2.6 2.3 L3.3 3.7 L4.7 4.4 L3.3 5.1 L2.6 6.5 L1.9 5.1 L0.5 4.4 L1.9 3.7Z M10.1 2.3 L10.8 3.7 L12.2 4.4 L10.8 5.1 L10.1 6.5 L9.4 5.1 L8 4.4 L9.4 3.7Z M5.8 8 L6.5 9.4 L7.9 10.1 L6.5 10.8 L5.8 12.2 L5.1 10.8 L3.7 10.1 L5.1 9.4Z" fill="#8c8c8c"/></svg>
<svg style="left:149px;top:707.5px" width="24" height="24" viewBox="0 0 24 24"><rect x="0" y="1" width="23.2" height="23" fill="#fcfcfc"/><rect x="4.6" y="2.8" width="14.4" height="7.7" fill="#22262a"/><rect x="4.6" y="14.3" width="14.4" height="8.3" fill="#22262a"/><path d="M2 4.5 V6.1 M2 7.5 V9.1 M2 10.5 V12.1 M2 15 V16.6 M2 18 V19.6 M2 20.8 V22.4 M21.2 4.5 V6.1 M21.2 7.5 V9.1 M21.2 10.5 V12.1 M21.2 15 V16.6 M21.2 18 V19.6 M21.2 20.8 V22.4" stroke="#22262a" stroke-width="1.5"/></svg>
<svg style="left:188.5px;top:707.5px" width="19" height="25" viewBox="0 0 19 25"><path d="M3.6 8 V6.6 A5.9 5.9 0 0 1 15.1 6.6 V13" fill="none" stroke="#fcfcfc" stroke-width="1.5"/><rect x="1.25" y="12.3" width="16.6" height="10.6" fill="none" stroke="#fcfcfc" stroke-width="1.5"/></svg>
<div class="a" style="left:0px;top:791px;width:221px;height:88px;background:#2f4858;"></div>
<div class="a" style="left:223px;top:791px;width:1443px;height:88px;background:#29404e;"></div>
<div class="a" style="left:221px;top:791px;width:2px;height:88px;background:#1c1e21;"></div>
<div class="a" style="left:0px;top:878px;width:1668px;height:1px;background:#1c1e21;"></div>
<svg style="left:26.5px;top:803px" width="29" height="15" viewBox="0 0 29 15"><polyline points="0.5,0.5 14.5,14.5 28.5,0.5" fill="none" stroke="#fcfcfc" stroke-width="1.3"/></svg>
<div class="a" style="left:59px;top:792px;width:22px;height:35px;background:#4cd38a;"></div>
<div class="t" style="left:60.40px;top:802.00px;font-size:15px;font-weight:normal;color:#1a3b2a;font-family:'Liberation Sans';">V1</div>
<svg style="left:111px;top:797px" width="25" height="26" viewBox="0 0 25 26"><path d="M3 22.5 L17.5 8" stroke="#8c8c8c" stroke-width="4.6"/><path d="M16.6 9 L21.9 3.7" stroke="#8c8c8c" stroke-width="4.6"/><path d="M17.4 8.2 L21.1 4.5" stroke="#202326" stroke-width="1.8"/><path d="M2.6 2.3 L3.3 3.7 L4.7 4.4 L3.3 5.1 L2.6 6.5 L1.9 5.1 L0.5 4.4 L1.9 3.7Z M10.1 2.3 L10.8 3.7 L12.2 4.4 L10.8 5.1 L10.1 6.5 L9.4 5.1 L8 4.4 L9.4 3.7Z M5.8 8 L6.5 9.4 L7.9 10.1 L6.5 10.8 L5.8 12.2 L5.1 10.8 L3.7 10.1 L5.1 9.4Z" fill="#8c8c8c"/></svg>
<svg style="left:149px;top:797.5px" width="24" height="24" viewBox="0 0 24 24"><rect x="0" y="1" width="23.2" height="23" fill="#fcfcfc"/><rect x="4.6" y="2.8" width="14.4" height="7.7" fill="#2f4858"/><rect x="4.6" y="14.3" width="14.4" height="8.3" fill="#2f4858"/><path d="M2 4.5 V6.1 M2 7.5 V9.1 M2 10.5 V12.1 M2 15 V16.6 M2 18 V19.6 M2 20.8 V22.4 M21.2 4.5 V6.1 M21.2 7.5 V9.1 M21.2 10.5 V12.1 M21.2 15 V16.6 M21.2 18 V19.6 M21.2 20.8 V22.4" stroke="#2f4858" stroke-width="1.5"/></svg>
<svg style="left:188.5px;top:797.5px" width="19" height="25" viewBox="0 0 19 25"><path d="M3.6 8 V6.6 A5.9 5.9 0 0 1 15.1 6.6 V13" fill="none" stroke="#fcfcfc" stroke-width="1.5"/><rect x="1.25" y="12.3" width="16.6" height="10.6" fill="none" stroke="#fcfcfc" stroke-width="1.5"/></svg>
<div class="a" style="left:0px;top:880px;width:221px;height:89px;background:#28252c;"></div>
<div class="a" style="left:223px;top:880px;width:1443px;height:89px;background:#28252c;"></div>
<div class="a" style="left:221px;top:880px;width:2px;height:89px;background:#1c1e21;"></div>
<div class="a" style="left:0px;top:968px;width:1668px;height:1px;background:#1c1e21;"></div>
<svg style="left:26.5px;top:892px" width="29" height="15" viewBox="0 0 29 15"><polyline points="0.5,0.5 14.5,14.5 28.5,0.5" fill="none" stroke="#fcfcfc" stroke-width="1.3"/></svg>
<div class="a" style="left:59px;top:881px;width:22px;height:35px;background:#4cd38a;"></div>
<div class="t" style="left:60.40px;top:891.00px;font-size:15px;font-weight:normal;color:#1a3b2a;font-family:'Liberation Sans';">A1</div>
<svg style="left:111px;top:886px" width="25" height="26" viewBox="0 0 25 26"><path d="M3 22.5 L17.5 8" stroke="#8c8c8c" stroke-width="4.6"/><path d="M16.6 9 L21.9 3.7" stroke="#8c8c8c" stroke-width="4.6"/><path d="M17.4 8.2 L21.1 4.5" stroke="#202326" stroke-width="1.8"/><path d="M2.6 2.3 L3.3 3.7 L4.7 4.4 L3.3 5.1 L2.6 6.5 L1.9 5.1 L0.5 4.4 L1.9 3.7Z M10.1 2.3 L10.8 3.7 L12.2 4.4 L10.8 5.1 L10.1 6.5 L9.4 5.1 L8 4.4 L9.4 3.7Z M5.8 8 L6.5 9.4 L7.9 10.1 L6.5 10.8 L5.8 12.2 L5.1 10.8 L3.7 10.1 L5.1 9.4Z" fill="#8c8c8c"/></svg>
<svg style="left:148px;top:887px" width="25" height="24" viewBox="0 0 25 24"><rect x="0.8" y="6.9" width="3.2" height="9" fill="#fcfcfc"/><path d="M5.3 6.9 L14.2 -0.5 V23.2 L5.3 15.9Z" fill="#fcfcfc"/><path d="M17.1 6.3 Q22.5 11.2 17.1 16.1 M16.9 1 Q31.1 11.3 16.9 21.6" fill="none" stroke="#fcfcfc" stroke-width="1.4"/></svg>
<svg style="left:188.5px;top:886.5px" width="19" height="25" viewBox="0 0 19 25"><path d="M3.6 8 V6.6 A5.9 5.9 0 0 1 15.1 6.6 V13" fill="none" stroke="#fcfcfc" stroke-width="1.5"/><rect x="1.25" y="12.3" width="16.6" height="10.6" fill="none" stroke="#fcfcfc" stroke-width="1.5"/></svg>
<div class="a" style="left:0px;top:969px;width:221px;height:67px;background:#28252c;"></div>
<div class="a" style="left:223px;top:969px;width:1443px;height:67px;background:#28252c;"></div>
<div class="a" style="left:221px;top:969px;width:2px;height:67px;background:#1c1e21;"></div>
<div class="a" style="left:0px;top:1035px;width:1668px;height:1px;background:#1c1e21;"></div>
<svg style="left:26.5px;top:981px" width="29" height="15" viewBox="0 0 29 15"><polyline points="0.5,0.5 14.5,14.5 28.5,0.5" fill="none" stroke="#fcfcfc" stroke-width="1.3"/></svg>
<div class="a" style="left:59px;top:970px;width:22px;height:35px;background:#4cd38a;"></div>
<div class="t" style="left:60.40px;top:980.00px;font-size:15px;font-weight:normal;color:#1a3b2a;font-family:'Liberation Sans';">A2</div>
<svg style="left:111px;top:975px" width="25" height="26" viewBox="0 0 25 26"><path d="M3 22.5 L17.5 8" stroke="#8c8c8c" stroke-width="4.6"/><path d="M16.6 9 L21.9 3.7" stroke="#8c8c8c" stroke-width="4.6"/><path d="M17.4 8.2 L21.1 4.5" stroke="#202326" stroke-width="1.8"/><path d="M2.6 2.3 L3.3 3.7 L4.7 4.4 L3.3 5.1 L2.6 6.5 L1.9 5.1 L0.5 4.4 L1.9 3.7Z M10.1 2.3 L10.8 3.7 L12.2 4.4 L10.8 5.1 L10.1 6.5 L9.4 5.1 L8 4.4 L9.4 3.7Z M5.8 8 L6.5 9.4 L7.9 10.1 L6.5 10.8 L5.8 12.2 L5.1 10.8 L3.7 10.1 L5.1 9.4Z" fill="#8c8c8c"/></svg>
<svg style="left:148px;top:976px" width="25" height="24" viewBox="0 0 25 24"><rect x="0.8" y="6.9" width="3.2" height="9" fill="#fcfcfc"/><path d="M5.3 6.9 L14.2 -0.5 V23.2 L5.3 15.9Z" fill="#fcfcfc"/><path d="M17.1 6.3 Q22.5 11.2 17.1 16.1 M16.9 1 Q31.1 11.3 16.9 21.6" fill="none" stroke="#fcfcfc" stroke-width="1.4"/></svg>
<svg style="left:188.5px;top:975.5px" width="19" height="25" viewBox="0 0 19 25"><path d="M3.6 8 V6.6 A5.9 5.9 0 0 1 15.1 6.6 V13" fill="none" stroke="#fcfcfc" stroke-width="1.5"/><rect x="1.25" y="12.3" width="16.6" height="10.6" fill="none" stroke="#fcfcfc" stroke-width="1.5"/></svg>
<div class="a" style="left:251px;top:692px;width:2px;height:344px;background:#fcfcfc;"></div>
<div class="a" style="left:1666px;top:582px;width:1px;height:454px;background:#2a2e32;"></div>
<div class="a" style="left:1667px;top:582px;width:2px;height:454px;background:#65686c;"></div>
<div class="a" style="left:1669px;top:582px;width:244px;height:454px;background:#2a2e32;"></div>
</body></html>
